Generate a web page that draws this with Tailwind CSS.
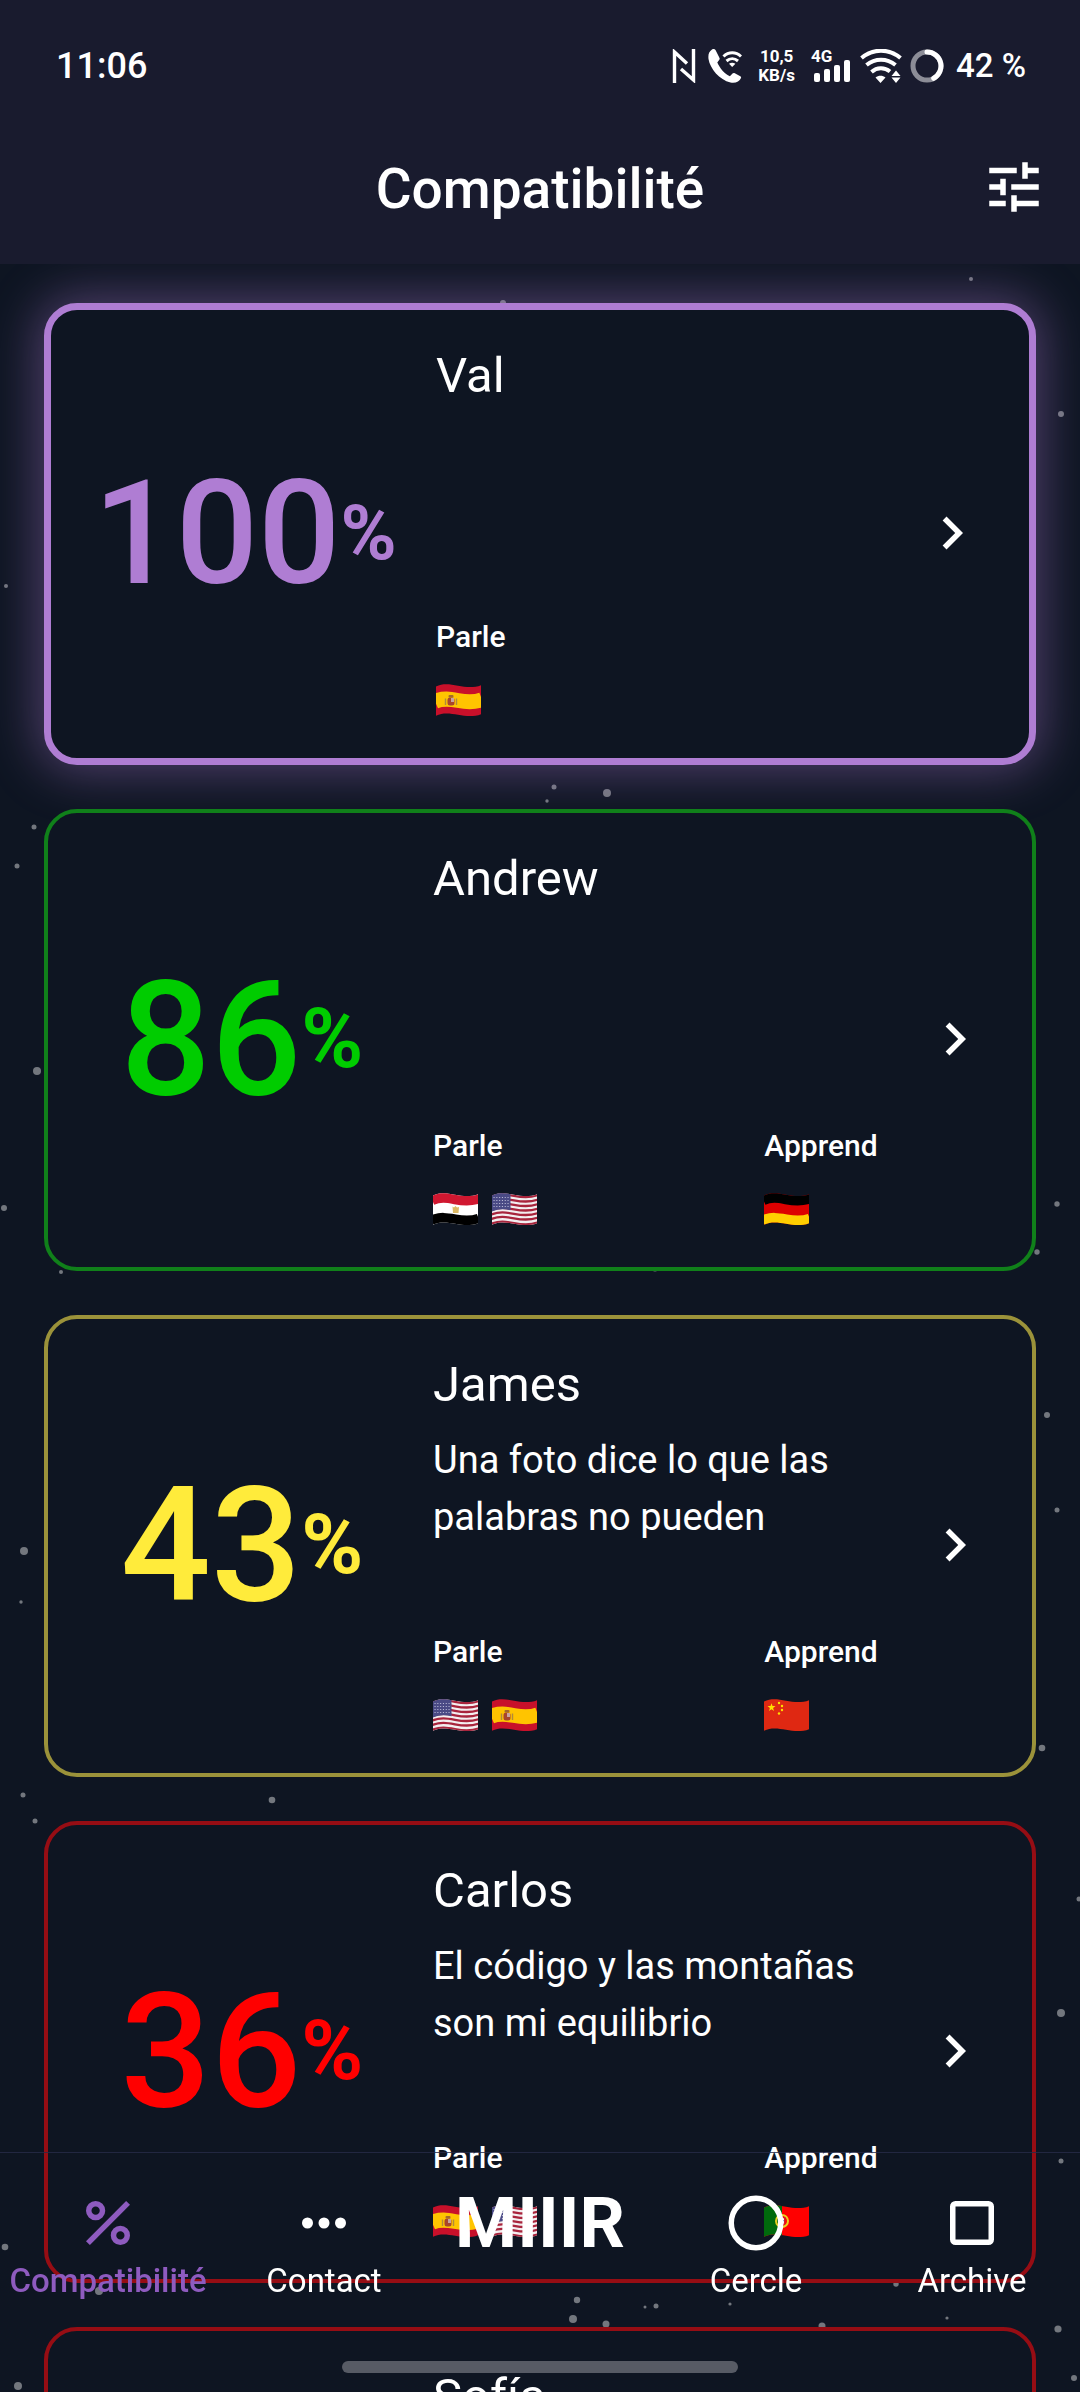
<!DOCTYPE html>
<html lang="fr">
<head>
    <meta charset="UTF-8">
    <meta name="viewport" content="width=device-width, initial-scale=1.0">
    <title>MIIIR - Compatibilité</title>
    <script src="https://cdn.jsdelivr.net/npm/@tailwindcss/browser@4"></script>
</head>
<body class="relative h-screen overflow-hidden bg-[#0e1522] font-[Roboto,sans-serif] text-white">

    <!-- Formes partagées -->
    <svg class="absolute h-0 w-0" aria-hidden="true">
        <defs>
            <clipPath id="flagShape">
                <path d="M0 2.5C7-.8 14 .3 22 1.8S38 4 45 1.2V30.2C38 33 30 32.3 22 30.8S7 28.4 0 31.7Z"/>
            </clipPath>
            <path id="wave" fill="none" d="M-1 .2C7-3.3 14-2.2 22-.7S38 1.5 46-1.5"/>
            <symbol id="es" viewBox="0 0 45 33">
                <g clip-path="url(#flagShape)">
                    <rect width="45" height="33" fill="#c8102a"/>
                    <use href="#wave" y="17.2" stroke="#ffc400" stroke-width="15"/>
                    <path d="M9.500 14.500v6.500M20.500 14.500v6.500" stroke="#b08a3c" stroke-width="1.400"/>
                    <rect x="11.500" y="13.500" width="7" height="8" rx="2.500" fill="#a8452c"/>
                    <rect x="15" y="14" width="3" height="4" fill="#c8a4a0"/>
                    <rect x="12.500" y="11" width="5" height="2.500" rx="1" fill="#a5682a"/>
                </g>
            </symbol>
            <symbol id="us" viewBox="0 0 45 33">
                <g clip-path="url(#flagShape)">
                    <rect width="45" height="33" fill="#f3eef0"/>
                    <g stroke="#a8243c" stroke-width="2.300">
                        <use href="#wave" y="3.500"/>
                        <use href="#wave" y="8"/>
                        <use href="#wave" y="12.500"/>
                        <use href="#wave" y="17"/>
                        <use href="#wave" y="21.500"/>
                        <use href="#wave" y="26"/>
                        <use href="#wave" y="30.800"/>
                    </g>
                    <path d="M0 0H18.500V17.300C12 15.600 7 15.600 0 18.500Z" fill="#4a4a85"/>
                    <path d="M1.500 4.500H18M1.500 7.500H18M1.500 10.500H18M1.500 13.500H18" stroke="#b9b9d6" stroke-width="1.100" stroke-dasharray="1.100 1.700"/>
                </g>
            </symbol>
            <symbol id="eg" viewBox="0 0 45 33">
                <g clip-path="url(#flagShape)">
                    <rect width="45" height="33" fill="#fff"/>
                    <use href="#wave" y="6.500" stroke="#d01730" stroke-width="11"/>
                    <use href="#wave" y="28" stroke="#000" stroke-width="12"/>
                    <path d="M19.500 13.500l1.500 1 1.500-1.500 1.500 1.500 2-.5-.5 6h-5.500z" fill="#dcb964"/>
                </g>
            </symbol>
            <symbol id="de" viewBox="0 0 45 33">
                <g clip-path="url(#flagShape)">
                    <rect width="45" height="33" fill="#d00"/>
                    <use href="#wave" y="6" stroke="#000" stroke-width="12"/>
                    <use href="#wave" y="28" stroke="#ffce00" stroke-width="12"/>
                </g>
            </symbol>
            <symbol id="cn" viewBox="0 0 45 33">
                <g clip-path="url(#flagShape)">
                    <rect width="45" height="33" fill="#df2812"/>
                    <g fill="#ffde00">
                        <path d="M7.500 4.200l1 2.900h3l-2.400 1.900.9 3-2.500-1.800L5 12l.9-3L3.500 7.100h3z"/>
                        <circle cx="15" cy="4" r="1.200"/>
                        <circle cx="18" cy="7" r="1.200"/>
                        <circle cx="18" cy="11" r="1.200"/>
                        <circle cx="15" cy="14.500" r="1.200"/>
                    </g>
                </g>
            </symbol>
            <symbol id="pt" viewBox="0 0 45 33">
                <g clip-path="url(#flagShape)">
                    <rect width="45" height="33" fill="#f00"/>
                    <rect width="18" height="33" fill="#006a0c"/>
                    <circle cx="18" cy="16" r="6" fill="none" stroke="#e8d020" stroke-width="2"/>
                    <path d="M14.500 12h7v5c0 5-7 5-7 0z" fill="#d8182c"/>
                    <path d="M16 13.300h4V17c0 3-4 3-4 0z" fill="#fff"/>
                    <path d="M18 13.500v5M16.300 15.700h3.400" stroke="#20409a" stroke-width="1"/>
                </g>
            </symbol>
            <symbol id="chevron" viewBox="0 0 24 24">
                <path fill="currentColor" d="M10 6 8.590 7.410 13.170 12l-4.580 4.590L10 18l6-6z"/>
            </symbol>
        </defs>
    </svg>

    <!-- Ciel étoilé -->
    <svg class="absolute inset-0 h-full w-full" fill="#fff" fill-opacity=".42" aria-hidden="true">
        <circle cx="971" cy="279" r="2"/>
        <circle cx="503" cy="303" r="3"/>
        <circle cx="6" cy="586" r="2"/>
        <circle cx="1061" cy="414" r="3"/>
        <circle cx="554" cy="787" r="2.500"/>
        <circle cx="607" cy="793" r="4"/>
        <circle cx="547" cy="801" r="1.700"/>
        <circle cx="34" cy="827" r="2.500"/>
        <circle cx="17" cy="866" r="2.500"/>
        <circle cx="37" cy="1071" r="4"/>
        <circle cx="4" cy="1208" r="3"/>
        <circle cx="61" cy="1272" r="2"/>
        <circle cx="655" cy="1269" r="2.500"/>
        <circle cx="1057" cy="1204" r="2.700"/>
        <circle cx="1037" cy="1252" r="2.700"/>
        <circle cx="1047" cy="1415" r="3"/>
        <circle cx="1057" cy="1510" r="2.500"/>
        <circle cx="24" cy="1551" r="4"/>
        <circle cx="21" cy="1602" r="1.700"/>
        <circle cx="1042" cy="1748" r="3.300"/>
        <circle cx="23" cy="1795" r="2.500"/>
        <circle cx="272" cy="1800" r="3.300"/>
        <circle cx="35" cy="1821" r="2.500"/>
        <circle cx="1079" cy="1899" r="2.500"/>
        <circle cx="1061" cy="2013" r="4"/>
        <circle cx="1061" cy="2161" r="2.500"/>
        <circle cx="5" cy="2247" r="3.300"/>
        <circle cx="99" cy="2291" r="4"/>
        <circle cx="896" cy="2284" r="2.700"/>
        <circle cx="577" cy="2300" r="3.200"/>
        <circle cx="573" cy="2319" r="4"/>
        <circle cx="606" cy="2324" r="3.500"/>
        <circle cx="645" cy="2307" r="1.500"/>
        <circle cx="656" cy="2306" r="2.500"/>
        <circle cx="730" cy="2304" r="1.600"/>
        <circle cx="822" cy="2326" r="3.500"/>
        <circle cx="947" cy="2318" r="1.600"/>
        <circle cx="1058" cy="2329" r="3.600"/>
        <circle cx="1074" cy="2378" r="3"/>
        <circle cx="18" cy="2386" r="4"/>
    </svg>

    <!-- En-tête -->
    <header class="relative z-10 bg-[#191b2e]">
        <!-- Barre d'état -->
        <div class="flex h-[110px] items-center justify-between pt-[22px] pr-[54px] pl-14 font-medium">
            <time class="text-[36px]">11:06</time>
            <div class="flex items-center">
                <svg class="h-[34px] w-[24px]" viewBox="0 0 24 34" fill="none" stroke="#fff" stroke-width="3.400" aria-label="NFC">
                    <path d="M2.500 34V3L15 14.500M21.500 0v31L9 20"/>
                </svg>
                <svg class="ml-3 h-[34px] w-[34px]" viewBox="0 0 34 34" aria-label="Appels Wi-Fi">
                    <path fill="#fff" d="M4 .5C1 2.500 0 5.500.5 10c1.500 9.500 11 21 22 23.500 5 1 9-1 10.500-4.500.3-.8 0-1.400-.7-1.800l-5.500-3c-.9-.5-1.700-.4-2.300.3l-2.600 2.800c-5-2-10.400-8.500-12.600-13.800l2-2.700c.5-.7.5-1.300.1-2L7.500 1C6.900-.1 5.400-.3 4 .5z"/>
                    <path fill="none" stroke="#fff" stroke-width="3" d="M15.500 7.500c5-5 12.500-5 17.500 0M18.500 12c3.500-3 8-3 11.500 0"/>
                    <path fill="#fff" d="M24.200 18l-3.200-3.300c2-1.400 4.400-1.400 6.400 0z"/>
                </svg>
                <div class="ml-4 text-center text-[17px] leading-[19px] font-bold">
                    <div>10,5</div>
                    <div>KB/s</div>
                </div>
                <div class="relative ml-4 h-[34px] w-[41px]">
                    <span class="absolute top-0 left-0 text-[17px] leading-[14px] font-bold">4G</span>
                    <svg class="h-full w-full" viewBox="0 0 41 34" fill="#fff" aria-label="Réseau 4G">
                        <rect x="3" y="24" width="6" height="9" rx="2"/>
                        <rect x="13" y="20" width="6" height="13" rx="2"/>
                        <rect x="23" y="16" width="6" height="17" rx="2"/>
                        <rect x="33" y="11" width="6" height="22" rx="2"/>
                    </svg>
                </div>
                <svg class="ml-2 h-[34px] w-[42px]" viewBox="0 0 42 34" fill="none" stroke="#fff" stroke-width="4" aria-label="Wi-Fi">
                    <path d="M1.500 9C13-.8 29-.8 40.500 9M6.500 16C15 9 27 9 35.500 16M11.500 23c5.500-4.800 13-4.800 18.500-.5"/>
                    <path fill="#fff" stroke="none" d="M20.500 34l-5-5.500c3-2.200 7-2.200 10 0zM36 21.500l4.500 5.500h-9zM36 34l4.500-5.500h-9z"/>
                </svg>
                <svg class="ml-2 h-[34px] w-[34px]" viewBox="0 0 34 34" fill="none" stroke-width="5" aria-label="Batterie">
                    <circle cx="17" cy="17" r="14" stroke="#8c8d97"/>
                    <path d="M17 3A14 14 0 0 1 23.700 29.300" stroke="#fff" stroke-linecap="round"/>
                </svg>
                <span class="ml-3 text-[33px]">42 %</span>
            </div>
        </div>

        <div class="grid h-[154px] grid-cols-[66px_1fr_66px] items-center px-[33px]">
            <h1 class="col-start-2 pt-1 text-center text-[55px] font-medium">Compatibilité</h1>
            <button type="button" class="h-[66px] w-[66px]" aria-label="Filtres">
                <svg class="h-full w-full" viewBox="0 0 24 24" fill="currentColor">
                    <path d="M3 17v2h6v-2H3zM3 5v2h10V5H3zm10 16v-2h8v-2h-8v-2h-2v6h2zM7 9v2H3v2h4v2h2V9H7zm14 4v-2H11v2h10zm-6-4h2V7h4V5h-4V3h-2v6z"/>
                </svg>
            </button>
        </div>
    </header>

    <!-- Liste des profils -->
    <main class="relative flex flex-col gap-11 px-11 pt-[39px]">
        <a href="#val" class="flex min-h-[462px] rounded-[33px] border-7 border-[#af7dd3] bg-[#0e1522] px-11 pt-9 pb-[38px] shadow-[0_0_50px_6px_#af7dd36b]">
            <div class="flex w-[300px] shrink-0 items-center justify-center text-[#af7dd3]">
                <span class="text-[145px] leading-none font-medium">100</span>
                <span class="text-[76px] leading-none font-bold">%</span>
            </div>
            <div class="ml-[41px] flex grow flex-col">
                <h2 class="text-[49px] leading-[60px]">Val</h2>
                <div class="mt-auto grid grid-cols-[2fr_1fr] gap-4">
                    <div>
                        <h3 class="text-[30px] leading-[36px] font-medium">Parle</h3>
                        <div class="mt-[25px] flex h-10 items-center gap-[14px]">
                            <svg class="h-[33px] w-[45px]" aria-label="Espagnol"><use href="#es"/></svg>
                        </div>
                    </div>
                </div>
            </div>
            <svg class="h-[66px] w-[66px] shrink-0 self-center" aria-hidden="true"><use href="#chevron"/></svg>
        </a>

        <a href="#andrew" class="flex min-h-[462px] rounded-[33px] border-4 border-[#10801a] bg-[#0e1522] px-11 pt-9 pb-[38px]">
            <div class="flex w-[300px] shrink-0 items-center justify-center text-[#00cc00]">
                <span class="text-[159px] leading-none font-medium">86</span>
                <span class="text-[84px] leading-none font-bold">%</span>
            </div>
            <div class="ml-[41px] flex grow flex-col">
                <h2 class="text-[49px] leading-[60px]">Andrew</h2>
                <div class="mt-auto grid grid-cols-[2fr_1fr] gap-4">
                    <div>
                        <h3 class="text-[30px] leading-[36px] font-medium">Parle</h3>
                        <div class="mt-[25px] flex h-10 items-center gap-[14px]">
                            <svg class="h-[33px] w-[45px]" aria-label="Arabe"><use href="#eg"/></svg>
                            <svg class="h-[33px] w-[45px]" aria-label="Anglais"><use href="#us"/></svg>
                        </div>
                    </div>
                    <div>
                        <h3 class="text-[30px] leading-[36px] font-medium">Apprend</h3>
                        <div class="mt-[25px] flex h-10 items-center gap-[14px]">
                            <svg class="h-[33px] w-[45px]" aria-label="Allemand"><use href="#de"/></svg>
                        </div>
                    </div>
                </div>
            </div>
            <svg class="h-[66px] w-[66px] shrink-0 self-center" aria-hidden="true"><use href="#chevron"/></svg>
        </a>

        <a href="#james" class="flex min-h-[462px] rounded-[33px] border-4 border-[#9b923a] bg-[#0e1522] px-11 pt-9 pb-[38px]">
            <div class="flex w-[300px] shrink-0 items-center justify-center text-[#ffeb3b]">
                <span class="text-[159px] leading-none font-medium">43</span>
                <span class="text-[84px] leading-none font-bold">%</span>
            </div>
            <div class="ml-[41px] flex grow flex-col">
                <h2 class="text-[49px] leading-[60px]">James</h2>
                <p class="mt-[17px] text-[38px] leading-[57px]">Una foto dice lo que las<br>palabras no pueden</p>
                <div class="mt-auto grid grid-cols-[2fr_1fr] gap-4">
                    <div>
                        <h3 class="text-[30px] leading-[36px] font-medium">Parle</h3>
                        <div class="mt-[25px] flex h-10 items-center gap-[14px]">
                            <svg class="h-[33px] w-[45px]" aria-label="Anglais"><use href="#us"/></svg>
                            <svg class="h-[33px] w-[45px]" aria-label="Espagnol"><use href="#es"/></svg>
                        </div>
                    </div>
                    <div>
                        <h3 class="text-[30px] leading-[36px] font-medium">Apprend</h3>
                        <div class="mt-[25px] flex h-10 items-center gap-[14px]">
                            <svg class="h-[33px] w-[45px]" aria-label="Chinois"><use href="#cn"/></svg>
                        </div>
                    </div>
                </div>
            </div>
            <svg class="h-[66px] w-[66px] shrink-0 self-center" aria-hidden="true"><use href="#chevron"/></svg>
        </a>

        <a href="#carlos" class="flex min-h-[462px] rounded-[33px] border-4 border-[#960d14] bg-[#0e1522] px-11 pt-9 pb-[38px]">
            <div class="flex w-[300px] shrink-0 items-center justify-center text-[#ff0000]">
                <span class="text-[159px] leading-none font-medium">36</span>
                <span class="text-[84px] leading-none font-bold">%</span>
            </div>
            <div class="ml-[41px] flex grow flex-col">
                <h2 class="text-[49px] leading-[60px]">Carlos</h2>
                <p class="mt-[17px] text-[38px] leading-[57px]">El código y las montañas<br>son mi equilibrio</p>
                <div class="mt-auto grid grid-cols-[2fr_1fr] gap-4">
                    <div>
                        <h3 class="text-[30px] leading-[36px] font-medium">Parle</h3>
                        <div class="mt-[25px] flex h-10 items-center gap-[14px]">
                            <svg class="h-[33px] w-[45px]" aria-label="Espagnol"><use href="#es"/></svg>
                            <svg class="h-[33px] w-[45px]" aria-label="Anglais"><use href="#us"/></svg>
                        </div>
                    </div>
                    <div>
                        <h3 class="text-[30px] leading-[36px] font-medium">Apprend</h3>
                        <div class="mt-[25px] flex h-10 items-center gap-[14px]">
                            <svg class="h-[33px] w-[45px]" aria-label="Portugais"><use href="#pt"/></svg>
                        </div>
                    </div>
                </div>
            </div>
            <svg class="h-[66px] w-[66px] shrink-0 self-center" aria-hidden="true"><use href="#chevron"/></svg>
        </a>

        <a href="#sofia" class="flex min-h-[462px] rounded-[33px] border-4 border-[#960d14] bg-[#0e1522] px-11 pt-9 pb-[38px]">
            <div class="ml-[341px] grow">
                <h2 class="text-[49px] leading-[60px]">Sofía</h2>
            </div>
        </a>
    </main>

    <!-- Navigation -->
    <nav class="fixed inset-x-0 bottom-0 border-t border-[#282c4a]/80">
        <div class="grid h-[208px] grid-cols-5 items-start pt-[37px] text-[33px] leading-[42px]">
            <a href="#compatibilite" class="flex flex-col items-center gap-1 font-medium text-[#8e5bbf]" aria-current="page">
                <svg class="h-[66px] w-[66px]" viewBox="0 0 24 24" fill="none" stroke="currentColor" stroke-width="2">
                    <circle cx="7.500" cy="7.500" r="2.500"/>
                    <circle cx="16.500" cy="16.500" r="2.500"/>
                    <path d="M4.700 19.300 19.300 4.700"/>
                </svg>
                <span>Compatibilité</span>
            </a>
            <a href="#contact" class="flex flex-col items-center gap-1">
                <svg class="h-[66px] w-[66px]" viewBox="0 0 24 24" fill="currentColor">
                    <circle cx="6" cy="12" r="2"/>
                    <circle cx="12" cy="12" r="2"/>
                    <circle cx="18" cy="12" r="2"/>
                </svg>
                <span>Contact</span>
            </a>
            <a href="#accueil" class="text-center text-[71px] leading-[66px] font-bold">MIIIR</a>
            <a href="#cercle" class="flex flex-col items-center gap-1">
                <svg class="h-[66px] w-[66px]" viewBox="0 0 24 24" fill="none" stroke="currentColor" stroke-width="2">
                    <circle cx="12" cy="12" r="9"/>
                </svg>
                <span>Cercle</span>
            </a>
            <a href="#archive" class="flex flex-col items-center gap-1">
                <svg class="h-[66px] w-[66px]" viewBox="0 0 24 24" fill="none" stroke="currentColor" stroke-width="2">
                    <rect x="5" y="5" width="14" height="14" rx="1"/>
                </svg>
                <span>Archive</span>
            </a>
        </div>
        <div class="mx-auto mb-[19px] h-3 w-[396px] rounded-full bg-[#575b65]"></div>
    </nav>
</body>
</html>
